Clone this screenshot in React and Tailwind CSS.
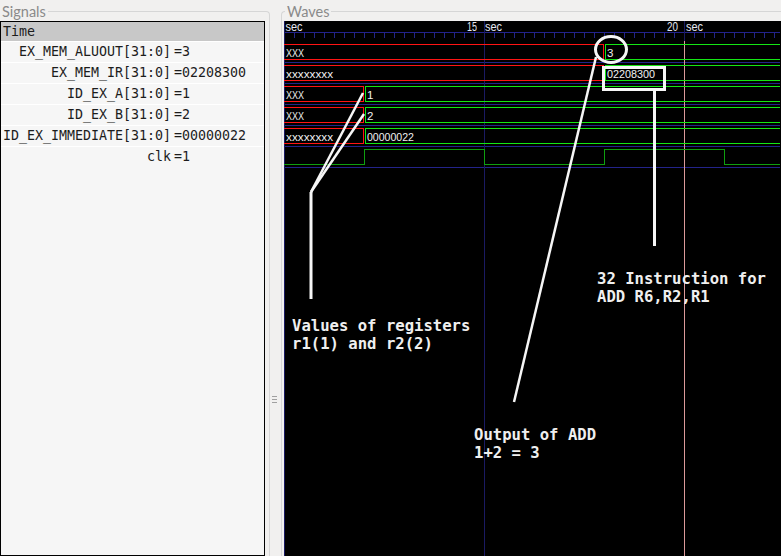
import React from "react";

const BLUE = "#23238a";
const VBLUE = "#1a1a62";
const RED = "#ff1414";
const GREEN = "#14e614";
const CLK = "#0f9e0f";
const PINK = "#dc9a9a";

const signals = [
  { name: "EX_MEM_ALUOUT[31:0]", value: "3" },
  { name: "EX_MEM_IR[31:0]", value: "02208300" },
  { name: "ID_EX_A[31:0]", value: "1" },
  { name: "ID_EX_B[31:0]", value: "2" },
  { name: "ID_EX_IMMEDIATE[31:0]", value: "00000022" },
  { name: "clk", value: "1" },
];

const buses = [
  { tx: 320, a: "XXX", aw: 18, b: "3" },
  { tx: 320, a: "xxxxxxxx", aw: 47, b: "02208300", bw: 48 },
  { tx: 80, a: "XXX", aw: 18, b: "1" },
  { tx: 80, a: "XXX", aw: 18, b: "2" },
  { tx: 80, a: "xxxxxxxx", aw: 47, b: "00000022", bw: 47 },
];

const ticks = Array.from({ length: 50 }, (_, k) => k * 10 + 0.5);

function WaveCanvas() {
  const W = 496;
  const H = 535;
  return (
    <svg width={W} height={H} className="block" shapeRendering="crispEdges">
      {/* time ruler */}
      <line x1={0} y1={11.5} x2={W} y2={11.5} stroke={BLUE} strokeWidth={1} />
      {ticks.map((x) => (
        <line key={x} x1={x} y1={11} x2={x} y2={17} stroke={BLUE} strokeWidth={1} />
      ))}
      <g fontFamily="'Liberation Sans', Arial, sans-serif" fontSize={12.5} fill="#e4e6f0" shapeRendering="auto">
        <text x={1.5} y={9.5} textLength={17} lengthAdjust="spacingAndGlyphs">sec</text>
        <text x={183} y={9.5} textLength={10} lengthAdjust="spacingAndGlyphs">15</text>
        <text x={201} y={9.5} textLength={17} lengthAdjust="spacingAndGlyphs">sec</text>
        <text x={383} y={9.5} textLength={11} lengthAdjust="spacingAndGlyphs">20</text>
        <text x={402} y={9.5} textLength={17} lengthAdjust="spacingAndGlyphs">sec</text>
      </g>

      {/* row separators */}
      {[0, 1, 2, 3, 4, 5].map((i) => (
        <line key={i} x1={0} y1={41.5 + 21 * i} x2={W} y2={41.5 + 21 * i} stroke={BLUE} strokeWidth={1} />
      ))}

      {/* grid verticals */}
      <line x1={0.5} y1={0} x2={0.5} y2={H} stroke={VBLUE} strokeWidth={1} />
      <line x1={200.5} y1={0} x2={200.5} y2={H} stroke={VBLUE} strokeWidth={1} />
      <line x1={400.5} y1={0} x2={400.5} y2={20} stroke={VBLUE} strokeWidth={1} />
      <line x1={400.5} y1={20} x2={400.5} y2={H} stroke={PINK} strokeWidth={1} />

      {/* bus waves */}
      {buses.map((r, i) => {
        const top = 23.5 + 21 * i;
        const bot = 38.5 + 21 * i;
        return (
          <g key={i}>
            <path d={`M0 ${top} H${r.tx - 0.5} V${bot} H0`} fill="none" stroke={RED} strokeWidth={1} />
            <path d={`M${W} ${top} H${r.tx + 1.5} V${bot} H${W}`} fill="none" stroke={GREEN} strokeWidth={1} />
          </g>
        );
      })}
      {/* clk */}
      <path
        d="M0 143.5 H80.5 V128.5 H200.5 V143.5 H320.5 V128.5 H440.5 V143.5 H496"
        fill="none"
        stroke={CLK}
        strokeWidth={1}
      />

      {/* value labels */}
      <g fontFamily="'Liberation Sans', Arial, sans-serif" fontSize={11.5} fill="#f0f0f0" shapeRendering="auto">
        {buses.map((r, i) => {
          const y = 35.5 + 21 * i;
          return (
            <g key={i}>
              <text x={2} y={y} textLength={r.aw} lengthAdjust="spacingAndGlyphs">{r.a}</text>
              {r.bw ? (
                <text x={r.tx + 3} y={y} textLength={r.bw} lengthAdjust="spacingAndGlyphs">{r.b}</text>
              ) : (
                <text x={r.tx + 3} y={y}>{r.b}</text>
              )}
            </g>
          );
        })}
      </g>

      {/* annotations */}
      <g stroke="#f6f6f6" fill="none" shapeRendering="auto">
        <ellipse cx={327} cy={28.5} rx={15.5} ry={13} strokeWidth={3} />
        <rect x={319.5} y={46.5} width={61} height={22} strokeWidth={3} />
        <line x1={370.5} y1={68} x2={370.5} y2={225} strokeWidth={3} />
        <line x1={312} y1={36} x2={230} y2={381} strokeWidth={2.5} />
        <line x1={27} y1={171} x2={27} y2={278} strokeWidth={3} />
        <line x1={27} y1={171} x2={79} y2={72} strokeWidth={2.5} />
        <line x1={27} y1={171} x2={80} y2={93} strokeWidth={2.5} />
      </g>
    </svg>
  );
}

export default function App() {
  return (
    <div className="w-[781px] h-[556px] overflow-hidden bg-[#f1f0ef] flex">
      {/* Signals pane */}
      <div className="w-[270px] h-full flex flex-col">
        <div className="flex-1 mt-[11px] border-t border-r border-[#d6d6d6] rounded-tr-[4px] flex flex-col min-h-0">
          <div className="-mt-[9px] h-[18px] w-fit pl-[2px] pr-[2px] bg-[#f1f0ef] text-[#8a8a8a] text-[14.5px] leading-[18px] font-['Lato','Noto_Sans',sans-serif]">
            Signals
          </div>
          <div className="flex-1 mr-[4px] border border-black bg-[#f6f6f6] overflow-hidden font-['DejaVu_Sans_Mono',monospace] text-[13.3px] text-[#1c1c1c]">
            <div className="h-[19px] bg-[#c8c8c8] pl-[2px] leading-[19px]">Time</div>
            {signals.map((s) => (
              <div key={s.name} className="h-[21px] border-t border-white flex leading-[20px]">
                <span className="w-[170px] text-right whitespace-pre">{s.name}</span>
                <span className="ml-[3px] whitespace-pre">={s.value}</span>
              </div>
            ))}
          </div>
        </div>
      </div>

      {/* Pane handle */}
      <div className="w-[11px] h-full pt-[396px] pl-[2px] flex flex-col gap-[2px]">
        <div className="w-[5px] h-px bg-[#a0a0a0]" />
        <div className="w-[5px] h-px bg-[#a0a0a0]" />
        <div className="w-[5px] h-px bg-[#a0a0a0]" />
      </div>

      {/* Waves pane */}
      <div className="flex-1 h-full flex flex-col">
        <div className="flex-1 mt-[11px] border-t border-l border-[#d6d6d6] rounded-tl-[4px] flex flex-col min-h-0">
          <div className="-mt-[9px] ml-[3px] h-[18px] w-fit pl-[2px] pr-[2px] bg-[#f1f0ef] text-[#8a8a8a] text-[14.5px] leading-[18px] font-['Lato','Noto_Sans',sans-serif]">
            Waves
          </div>
          <div className="relative flex-1 ml-[2px] bg-black overflow-hidden">
            <WaveCanvas />
            <div className="absolute left-[8px] top-[296px] text-[#efefef] font-bold font-['DejaVu_Sans_Mono',monospace] text-[15.6px] leading-[18px] whitespace-pre">
              {"Values of registers\nr1(1) and r2(2)"}
            </div>
            <div className="absolute left-[313px] top-[249px] text-[#efefef] font-bold font-['DejaVu_Sans_Mono',monospace] text-[15.6px] leading-[18px] whitespace-pre">
              {"32 Instruction for\nADD R6,R2,R1"}
            </div>
            <div className="absolute left-[190px] top-[405px] text-[#efefef] font-bold font-['DejaVu_Sans_Mono',monospace] text-[15.6px] leading-[18px] whitespace-pre">
              {"Output of ADD\n1+2 = 3"}
            </div>
          </div>
        </div>
      </div>
    </div>
  );
}
